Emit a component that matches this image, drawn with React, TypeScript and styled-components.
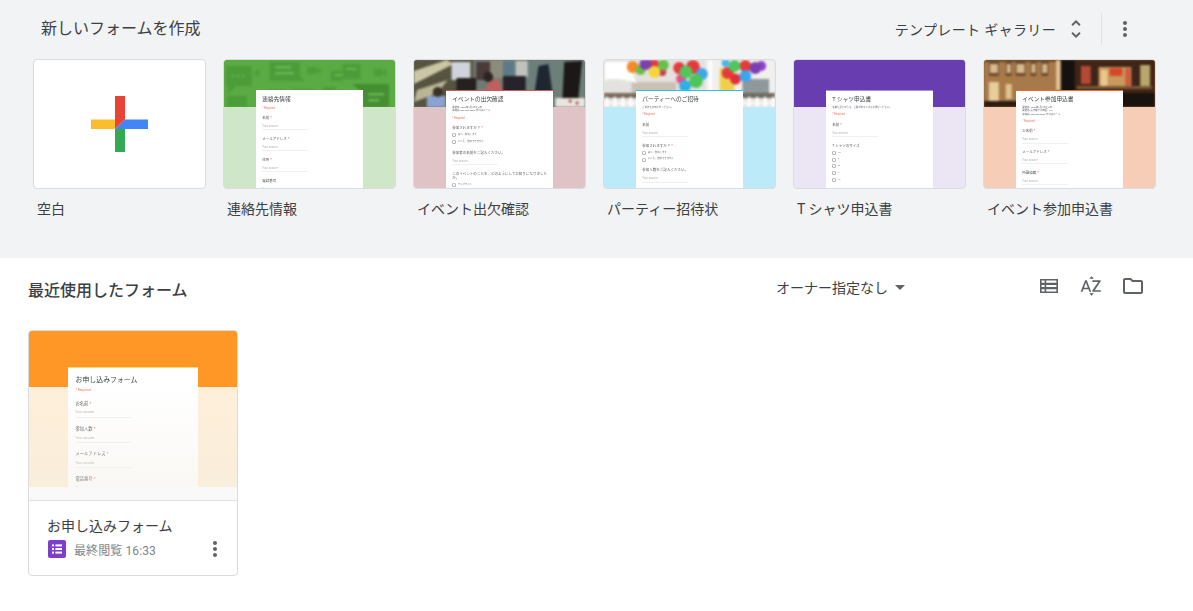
import React from 'react';
import styled, { createGlobalStyle } from 'styled-components';
import { MdArrowDropDown, MdMoreVert, MdOutlineFolder, MdSortByAlpha, MdUnfoldMore } from 'react-icons/md';

const GlobalStyle = createGlobalStyle`
  html, body {
    margin: 0;
    padding: 0;
    background: #fff;
    font-family: Roboto, "Noto Sans CJK JP", "Noto Sans", sans-serif;
    color: #3c4043;
  }
  * { box-sizing: border-box; }
`;

const Page = styled.div`
  width: 1193px;
  height: 611px;
  overflow: hidden;
`;

const TemplateSection = styled.section`
  height: 258px;
  background: #f1f3f4;
  padding: 13px 37px 0 33px;
`;

const TemplateHeader = styled.div`
  display: flex;
  align-items: center;
  height: 32px;
  padding: 0 12px 0 8px;
  margin-bottom: 14px;
`;

const SectionTitle = styled.h2<{ $bold?: boolean }>`
  margin: 0;
  font-size: 16px;
  line-height: 30px;
  font-weight: ${(p) => (p.$bold ? 500 : 400)};
  color: #3c4043;
  flex: 1;
`;

const GalleryLabel = styled.span`
  font-size: 14px;
  color: #3c4043;
  letter-spacing: 0.35px;
`;

const IconSlot = styled.span<{ $color?: string; $size?: number }>`
  display: inline-flex;
  align-items: center;
  justify-content: center;
  color: ${(p) => p.$color || '#5f6368'};
  font-size: ${(p) => p.$size || 24}px;
`;

const GalleryToggle = styled(IconSlot)`
  margin-left: 8px;
`;

const Divider = styled.span`
  width: 1px;
  height: 32px;
  background: #e0e2e4;
  margin-left: 13px;
`;

const GalleryMore = styled(IconSlot)`
  margin-left: 11px;
  margin-right: 7px;
`;

const TemplateRow = styled.div`
  display: grid;
  grid-template-columns: repeat(6, 173px);
  column-gap: 17px;
`;

const TemplateItem = styled.div`
  display: flex;
  flex-direction: column;
`;

const Thumb = styled.div<{ $bg: string }>`
  position: relative;
  height: 130px;
  border: 1px solid #dadce0;
  border-radius: 4px;
  overflow: hidden;
  background: ${(p) => p.$bg};
`;

const BlankThumb = styled(Thumb)`
  display: flex;
  align-items: center;
  justify-content: center;
`;

const TemplateName = styled.div`
  font-size: 14px;
  line-height: 20px;
  margin-top: 10px;
  padding-left: 4px;
  color: #3c4043;
`;

const BannerBox = styled.div<{ $height: number; $color: string }>`
  height: ${(p) => p.$height}px;
  background: ${(p) => p.$color};
  overflow: hidden;
  svg { display: block; width: 100%; height: 100%; filter: blur(0.8px); }
`;

const Sheet = styled.div<{ $left: number; $top: number; $width: number; $accent: string; $size: number; $pad: number }>`
  position: absolute;
  left: ${(p) => p.$left}px;
  top: ${(p) => p.$top}px;
  width: ${(p) => p.$width}px;
  bottom: 0;
  background: #fff;
  border-top: 1.5px solid ${(p) => p.$accent};
  padding: ${(p) => p.$pad}em 0 0 1.1em;
  font-size: ${(p) => p.$size}px;
  overflow: hidden;
  color: #3c4043;
  filter: blur(0.25px);
`;

const SheetTitle = styled.div`
  font-size: 1em;
  line-height: 1.2em;
  white-space: nowrap;
  color: #3c4043;
`;

const SheetNote = styled.div`
  font-size: 0.42em;
  line-height: 1.35em;
  margin-top: 1.4em;
  white-space: pre;
  color: #5f6368;
`;

const SheetRequired = styled.div`
  font-size: 0.48em;
  line-height: 1em;
  margin-top: 1.5em;
  color: #e8776c;
`;

const FieldLabel = styled.div`
  font-size: 0.62em;
  line-height: 1.25em;
  margin-top: 1.9em;
  color: #55585c;
  padding-right: 1em;
`;

const Star = styled.span`
  color: #db4437;
`;

const AnswerLine = styled.div`
  font-size: 0.5em;
  line-height: 1em;
  margin-top: 1.6em;
  padding-bottom: 0.5em;
  width: 16em;
  color: #b5b5b5;
  border-bottom: 1px solid #f0f0f0;
`;

const Choice = styled.div`
  display: flex;
  align-items: center;
  gap: 0.6em;
  font-size: 0.42em;
  line-height: 1em;
  margin-top: 1.15em;
  color: #70757a;
  &::before {
    content: '';
    width: 4px;
    height: 4px;
    box-shadow: inset 0 0 0 0.6px #8a8d90;
    border-radius: 50%;
    flex: none;
  }
`;

const Fade = styled.div`
  position: absolute;
  left: 0;
  right: 0;
  top: 57px;
  bottom: 0;
  background: linear-gradient(rgba(245, 240, 230, 0), rgba(240, 235, 225, 0.4));
  pointer-events: none;
`;

const Shelf = styled.div`
  position: absolute;
  left: 0;
  right: 0;
  bottom: 0;
  height: 13px;
  background: #f9f9f9;
`;

const RecentSection = styled.section`
  padding: 18px 48px 0 28px;
`;

const RecentHeader = styled.div`
  display: flex;
  align-items: center;
  height: 30px;
  margin-bottom: 24px;
`;

const OwnerFilter = styled.div`
  display: flex;
  align-items: center;
  font-size: 14px;
  color: #3c4043;
  margin-right: 125px;
  margin-top: -8px;
`;

const ViewIcons = styled.div`
  display: flex;
  align-items: center;
  gap: 18px;
  margin-top: -10px;
`;

const FormCard = styled.div`
  width: 210px;
  height: 246px;
  border: 1px solid #dadce0;
  border-radius: 4px;
  overflow: hidden;
  background: #fff;
`;

const CardThumb = styled.div`
  position: relative;
  height: 170px;
  background: #feefd9;
  border-bottom: 1px solid #e0e0e0;
`;

const CardBody = styled.div`
  padding: 15px 12px 0 18px;
`;

const CardTitle = styled.div`
  font-size: 14px;
  line-height: 20px;
  color: #3c4043;
`;

const CardMeta = styled.div`
  display: flex;
  align-items: center;
  margin-top: 1px;
  padding-left: 1px;
  font-size: 12px;
  color: #80868b;
`;

const MetaText = styled.span`
  margin-left: 8px;
  flex: 1;
  letter-spacing: 0.1px;
`;

const CardMore = styled(IconSlot)`
  margin-right: -2px;
`;

type Row =
  | { kind: 'note'; text: string }
  | { kind: 'required' }
  | { kind: 'field'; label: string; star?: boolean }
  | { kind: 'choice'; label: string; star?: boolean; options: string[] };

const MiniForm = ({ rows }: { rows: Row[] }) => (
  <>
    {rows.map((row, i) => {
      if (row.kind === 'note') return <SheetNote key={i}>{row.text}</SheetNote>;
      if (row.kind === 'required') return <SheetRequired key={i}>* Required</SheetRequired>;
      return (
        <React.Fragment key={i}>
          <FieldLabel>
            {row.label}
            {row.star && <Star> *</Star>}
          </FieldLabel>
          {row.kind === 'field' ? (
            <AnswerLine>Your answer</AnswerLine>
          ) : (
            row.options.map((o) => <Choice key={o}>{o}</Choice>)
          )}
        </React.Fragment>
      );
    })}
  </>
);

const ContactArt = () => (
  <svg viewBox="0 0 173 47" preserveAspectRatio="none">
    <g fill="#4c9c3a">
      <rect x="2" y="6" width="26" height="20" />
      <polygon points="4,26 4,34 12,26" />
      <polygon points="29,14 36,9 36,16" />
      <rect x="46" y="2" width="31" height="19" />
      <polygon points="68,21 82,21 75,15" />
      <rect x="84" y="7" width="10" height="7" />
      <polygon points="94,10 98,7 98,14 94,11" />
      <rect x="108" y="11" width="12" height="10" />
      <rect x="120" y="4" width="18" height="15" />
      <rect x="152" y="9" width="8" height="7" />
      <polygon points="160,12 164,9 164,16 160,13" />
      <rect x="68" y="29" width="22" height="4" />
      <rect x="100" y="27" width="13" height="6" />
      <rect x="3" y="36" width="20" height="11" />
      <rect x="45" y="30" width="16" height="6" />
    </g>
    <polygon points="130,24 167,24 167,47 140,47 140,33" fill="#438f32" />
    <g fill="#68b553">
      <rect x="52" y="6" width="16" height="2.5" />
      <rect x="52" y="12" width="19" height="2.5" />
      <rect x="124" y="8" width="10" height="2" />
      <rect x="112" y="14" width="8" height="2" />
      <rect x="146" y="33" width="16" height="2.5" />
      <rect x="146" y="39" width="11" height="2.5" />
      <circle cx="9" cy="16" r="1.2" />
      <circle cx="14" cy="16" r="1.2" />
      <circle cx="19" cy="16" r="1.2" />
    </g>
  </svg>
);

const PeopleArt = () => (
  <svg viewBox="0 0 173 47" preserveAspectRatio="none">
    <rect width="173" height="47" fill="#6f7a72" />
    <rect width="60" height="47" fill="#56543f" />
    <polygon points="0,11 33,0 40,4 0,24" fill="#cbc6a6" />
    <polygon points="3,30 34,20 24,33 0,42" fill="#b9b596" />
    <polygon points="60,30 112,30 112,47 60,47" fill="#8b8a77" />
    <rect x="113" y="0" width="60" height="47" fill="#6d7f79" />
    <rect x="77" y="0" width="36" height="18" fill="#8d8c7a" />
    <rect x="90" y="1" width="12" height="15" fill="#5d7a88" />
    <rect x="103" y="1" width="12" height="16" fill="#bfc2bf" />
    <rect x="90" y="16" width="23" height="16" fill="#26242a" />
    <rect x="38" y="2" width="19" height="18" fill="#cfd3dc" />
    <rect x="43" y="18" width="20" height="13" fill="#24211f" />
    <rect x="63" y="2" width="14" height="18" fill="#4b3a3a" />
    <polygon points="72,32 76,21 86,19 90,32" fill="#c0605e" />
    <circle cx="75" cy="17" r="5" fill="#2c2320" />
    <rect x="13" y="36" width="19" height="11" fill="#8aa3d0" />
    <circle cx="24" cy="32" r="5" fill="#3d3027" />
    <polygon points="122,32 126,6 136,4 140,32" fill="#1e2730" />
    <polygon points="150,41 152,2 170,1 166,41" fill="#1b1817" />
    <rect x="143" y="38" width="30" height="9" fill="#e8e4df" />
    <circle cx="158" cy="41" r="1.5" fill="#b03a3a" />
    <circle cx="165" cy="43" r="1.5" fill="#b03a3a" />
  </svg>
);

const PartyArt = () => {
  const balloons: [number, number, number, string][] = [
    [29, 7, 6, '#f58a2a'], [37, 10, 5, '#6abf45'], [50, 4, 5.5, '#e53b3b'], [42, 4, 6, '#7c3fb0'],
    [59, 12, 4, '#c93a5a'], [51, 12, 6, '#f4d63a'], [60, 5, 5.5, '#67c04a'],
    [76, 8, 6, '#e63a3a'], [90, 7, 7, '#e63a3a'], [78, 19, 5, '#ea4f8a'], [99, 14, 6, '#41a5ea'],
    [83, 12, 6.5, '#4ec75c'], [82, 26, 6, '#30aee8'], [93, 21, 7, '#4cc65a'],
    [123, 3, 4, '#47b7ee'], [143, 6, 6, '#e63a3a'], [125, 13, 6, '#e63a3a'], [133, 19, 5.5, '#e32f3a'],
    [132, 6, 6, '#4ec75c'], [143, 16, 6, '#3ba6ee'], [159, 6, 5, '#8a46c8'], [153, 8, 6, '#7c3fb0'],
  ];
  return (
    <svg viewBox="0 0 173 47" preserveAspectRatio="none">
      <rect width="173" height="47" fill="#e4e2de" />
      <rect x="28" y="22" width="45" height="12" fill="#c9c1b3" />
      <rect x="103" y="0" width="70" height="38" fill="#f0f0ee" />
      <rect x="106" y="0" width="3" height="36" fill="#fff" />
      <rect x="117" y="8" width="15" height="24" fill="#eed24e" />
      <rect x="140" y="19" width="27" height="17" fill="#8f989b" />
      <path d="M1 2 H24 Q30 16 33 23 Q12 17 1 20 Z" fill="#fff" />
      <rect x="0" y="33" width="103" height="5" fill="#7a6b5b" />
      <rect x="136" y="33" width="37" height="5" fill="#6f6a60" />
      {balloons.map(([x, y, r, c], i) => (
        <circle key={i} cx={x} cy={y} r={r} fill={c} />
      ))}
      {Array.from({ length: 22 }).map((_, i) => (
        <polygon key={i} points={`${i * 8 + 1},47 ${i * 8 + 1},39 ${i * 8 + 3},36 ${i * 8 + 5},39 ${i * 8 + 5},47`} fill="#fbfbfb" />
      ))}
      <rect x="0" y="42" width="173" height="2" fill="#fbfbfb" />
    </svg>
  );
};

const HallArt = () => (
  <svg viewBox="0 0 173 47" preserveAspectRatio="none">
    <rect width="173" height="47" fill="#a87a4a" />
    <rect x="0" width="173" height="2" fill="#6d4a2a" />
    <rect x="78" width="14" height="40" fill="#14120f" />
    <rect x="92" width="81" height="47" fill="#3f2418" />
    {[[5, 10], [22, 6], [32, 10], [47, 6], [58, 7]].map(([x, w]) => (
      <rect key={x} x={x} y="2" width={w} height="14" fill="#6a4b30" />
    ))}
    {[[6, 8], [23, 4], [33, 8], [48, 4], [59, 5]].map(([x, w]) => (
      <rect key={x} x={x} y="4" width={w} height="9" fill="#d8b88e" />
    ))}
    <rect x="5" y="22" width="10" height="19" fill="#e6cd9c" />
    <rect x="22" y="24" width="6" height="15" fill="#e0c48e" />
    <rect x="73" y="0" width="4" height="30" fill="#e2c79a" />
    <rect x="98" y="6" width="10" height="18" fill="#b44a32" />
    <rect x="116" y="7" width="33" height="22" fill="#c89a5e" />
    <rect x="118" y="10" width="7" height="16" fill="#e8c88c" />
    <rect x="127" y="8" width="13" height="8" fill="#d8462a" />
    <rect x="143" y="8" width="5" height="18" fill="#cf5a3a" />
    <rect x="158" y="5" width="10" height="22" fill="#b8a66c" />
    <rect x="94" y="26" width="76" height="3" fill="#7a5a36" />
    <rect x="0" y="41" width="173" height="6" fill="#2b1b10" />
    <rect x="140" y="33" width="33" height="14" fill="#1a120c" />
  </svg>
);

const templates: {
  name: string;
  form: string;
  bottom: string;
  banner: string;
  accent: string;
  art?: React.ReactNode;
  rows: Row[];
}[] = [
  {
    name: '連絡先情報',
    form: '連絡先情報',
    bottom: '#cfe6c8',
    banner: '#5aab44',
    accent: '#fff',
    art: <ContactArt />,
    rows: [
      { kind: 'required' },
      { kind: 'field', label: '名前', star: true },
      { kind: 'field', label: 'メールアドレス', star: true },
      { kind: 'field', label: '住所', star: true },
      { kind: 'field', label: '電話番号' },
    ],
  },
  {
    name: 'イベント出欠確認',
    form: 'イベントの出欠確認',
    bottom: '#e0c3c6',
    banner: '#777',
    accent: '#c9595c',
    art: <PeopleArt />,
    rows: [
      { kind: 'note', text: '開催日: 2020年1月4日と5日\n連絡先: 000-000-0000 またはメール' },
      { kind: 'required' },
      { kind: 'choice', label: '参加されますか？', star: true, options: ['はい、参加します', 'いいえ、参加できません'] },
      { kind: 'field', label: '参加者の名前をご記入ください。' },
      { kind: 'choice', label: 'このイベントのことを、どのようにしてお知りになりましたか。', options: ['ウェブサイト', 'メール'] },
    ],
  },
  {
    name: 'パーティー招待状',
    form: 'パーティーへのご招待',
    bottom: '#bdeaf9',
    banner: '#e6e4e0',
    accent: '#2fc0f2',
    art: <PartyArt />,
    rows: [
      { kind: 'note', text: 'ご出欠をお知らせください。' },
      { kind: 'required' },
      { kind: 'field', label: '名前' },
      { kind: 'choice', label: '参加されますか？', star: true, options: ['はい、参加します', 'いいえ、参加できません'] },
      { kind: 'field', label: '参加人数をご記入ください。' },
    ],
  },
  {
    name: 'T シャツ申込書',
    form: 'T シャツ申込書',
    bottom: '#ebe5f4',
    banner: '#673db0',
    accent: '#a88de0',
    rows: [
      { kind: 'note', text: '名前を記入のうえ、ご希望のサイズをお選びください。' },
      { kind: 'required' },
      { kind: 'field', label: '名前', star: true },
      { kind: 'choice', label: 'T シャツのサイズ', options: ['XS', 'S', 'M', 'L', 'XL'] },
    ],
  },
  {
    name: 'イベント参加申込書',
    form: 'イベント参加申込書',
    bottom: '#f6cdb7',
    banner: '#8c5f32',
    accent: '#f4682a',
    art: <HallArt />,
    rows: [
      { kind: 'note', text: '開催日: 2020年1月4日と5日\n開催地: 東京都千代田区1-2-3\n連絡先: 000-000-0000 またはメール' },
      { kind: 'required' },
      { kind: 'field', label: 'お名前', star: true },
      { kind: 'field', label: 'メールアドレス', star: true },
      { kind: 'field', label: '所属組織', star: true },
    ],
  },
];

const recentRows: Row[] = [
  { kind: 'required' },
  { kind: 'field', label: 'お名前', star: true },
  { kind: 'field', label: '参加人数', star: true },
  { kind: 'field', label: 'メールアドレス', star: true },
  { kind: 'field', label: '電話番号', star: true },
];

const PlusMark = () => (
  <svg width="57" height="56" viewBox="0 0 57 56">
    <rect x="0" y="23.5" width="24" height="9.5" fill="#fbbc2e" />
    <polygon points="24,0 34,0 34,23.5 24,33" fill="#ea4335" />
    <polygon points="24,33 34,23.5 57,23.5 57,33" fill="#4285f4" />
    <rect x="24" y="33" width="10" height="23" fill="#34a853" />
  </svg>
);

const ListViewIcon = () => (
  <svg width="24" height="24" viewBox="0 0 24 24">
    <path fill="#5f6368" fillRule="evenodd" d="M3 5h18v14H3zM4.6 6.6v2.1h3V6.6zm4.6 0v2.1h10.2V6.6zM4.6 10.9v2.2h3v-2.2zm4.6 0v2.2h10.2v-2.2zM4.6 15.3v2.1h3v-2.1zm4.6 0v2.1h10.2v-2.1z" />
  </svg>
);

const FormsGlyph = () => (
  <svg width="18" height="18" viewBox="0 0 18 18">
    <rect width="18" height="18" rx="2" fill="#7e3ec9" />
    <g fill="#fff">
      <rect x="4" y="4.4" width="2" height="2" />
      <rect x="7.4" y="4.4" width="6.6" height="2" />
      <rect x="4" y="8" width="2" height="2" />
      <rect x="7.4" y="8" width="6.6" height="2" />
      <rect x="4" y="11.6" width="2" height="2" />
      <rect x="7.4" y="11.6" width="6.6" height="2" />
    </g>
  </svg>
);

export default function App() {
  return (
    <Page>
      <GlobalStyle />
      <TemplateSection>
        <TemplateHeader>
          <SectionTitle>新しいフォームを作成</SectionTitle>
          <GalleryLabel>テンプレート ギャラリー</GalleryLabel>
          <GalleryToggle $size={24}>
            <MdUnfoldMore />
          </GalleryToggle>
          <Divider />
          <GalleryMore $size={24}>
            <MdMoreVert />
          </GalleryMore>
        </TemplateHeader>
        <TemplateRow>
          <TemplateItem>
            <BlankThumb $bg="#fff">
              <PlusMark />
            </BlankThumb>
            <TemplateName>空白</TemplateName>
          </TemplateItem>
          {templates.map((t) => (
            <TemplateItem key={t.name}>
              <Thumb $bg={t.bottom}>
                <BannerBox $height={47} $color={t.banner}>
                  {t.art}
                </BannerBox>
                <Sheet $left={32} $top={30} $width={107} $accent={t.accent} $size={5.7} $pad={0.85}>
                  <SheetTitle>{t.form}</SheetTitle>
                  <MiniForm rows={t.rows} />
                </Sheet>
              </Thumb>
              <TemplateName>{t.name}</TemplateName>
            </TemplateItem>
          ))}
        </TemplateRow>
      </TemplateSection>
      <RecentSection>
        <RecentHeader>
          <SectionTitle $bold>最近使用したフォーム</SectionTitle>
          <OwnerFilter>
            オーナー指定なし
            <IconSlot $size={24}>
              <MdArrowDropDown />
            </IconSlot>
          </OwnerFilter>
          <ViewIcons>
            <ListViewIcon />
            <IconSlot $size={24}>
              <MdSortByAlpha />
            </IconSlot>
            <IconSlot $size={24}>
              <MdOutlineFolder />
            </IconSlot>
          </ViewIcons>
        </RecentHeader>
        <FormCard>
          <CardThumb>
            <BannerBox $height={56} $color="#ff9727" />
            <Sheet $left={39} $top={36} $width={130} $accent="#ffd978" $size={6.9} $pad={1.15}>
              <SheetTitle>お申し込みフォーム</SheetTitle>
              <MiniForm rows={recentRows} />
            </Sheet>
            <Fade />
            <Shelf />
          </CardThumb>
          <CardBody>
            <CardTitle>お申し込みフォーム</CardTitle>
            <CardMeta>
              <FormsGlyph />
              <MetaText>最終閲覧 16:33</MetaText>
              <CardMore $size={24}>
                <MdMoreVert />
              </CardMore>
            </CardMeta>
          </CardBody>
        </FormCard>
      </RecentSection>
    </Page>
  );
}
